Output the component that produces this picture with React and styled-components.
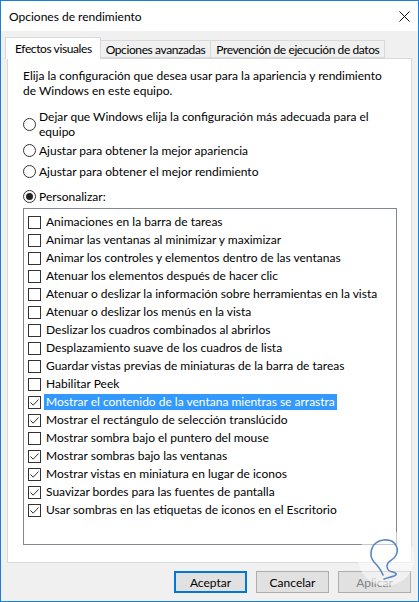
import styled, { createGlobalStyle } from "styled-components";

const GlobalStyle = createGlobalStyle`
  html, body {
    margin: 0;
    padding: 0;
    background: #ffffff;
  }
  body {
    font-family: "Lato", "Noto Sans", sans-serif;
    font-size: 12px;
    color: #000;
  }
`;

const effects = [
  { label: "Animaciones en la barra de tareas", checked: false },
  { label: "Animar las ventanas al minimizar y maximizar", checked: false },
  { label: "Animar los controles y elementos dentro de las ventanas", checked: false },
  { label: "Atenuar los elementos después de hacer clic", checked: false },
  { label: "Atenuar o deslizar la información sobre herramientas en la vista", checked: false },
  { label: "Atenuar o deslizar los menús en la vista", checked: false },
  { label: "Deslizar los cuadros combinados al abrirlos", checked: false },
  { label: "Desplazamiento suave de los cuadros de lista", checked: false },
  { label: "Guardar vistas previas de miniaturas de la barra de tareas", checked: false },
  { label: "Habilitar Peek", checked: false },
  { label: "Mostrar el contenido de la ventana mientras se arrastra", checked: true, selected: true },
  { label: "Mostrar el rectángulo de selección translúcido", checked: true },
  { label: "Mostrar sombra bajo el puntero del mouse", checked: false },
  { label: "Mostrar sombras bajo las ventanas", checked: true },
  { label: "Mostrar vistas en miniatura en lugar de iconos", checked: true },
  { label: "Suavizar bordes para las fuentes de pantalla", checked: true },
  { label: "Usar sombras en las etiquetas de iconos en el Escritorio", checked: true },
];

export default function App() {
  return (
    <>
      <GlobalStyle />
      <Window>
        <TitleBar>
          <Title>Opciones de rendimiento</Title>
          <CloseButton>
            <svg width="11" height="11" viewBox="0 0 11 11">
              <path d="M0.5 0.5 L10.5 10.5 M10.5 0.5 L0.5 10.5" stroke="#111" strokeWidth="1" />
            </svg>
          </CloseButton>
        </TitleBar>

        <Body>
          <Tabs>
            <Tab $active>Efectos visuales</Tab>
            <Tab>Opciones avanzadas</Tab>
            <Tab>Prevención de ejecución de datos</Tab>
          </Tabs>

          <Panel>
            <Intro>
              Elija la configuración que desea usar para la apariencia y rendimiento
              <br />
              de Windows en este equipo.
            </Intro>

            <RadioGroup>
              <RadioRow $gap={0}>
                <Radio />
                <span>
                  Dejar que Windows elija la configuración más adecuada para el
                  <br />
                  equipo
                </span>
              </RadioRow>
              <RadioRow $gap={4}>
                <Radio />
                <span>Ajustar para obtener la mejor apariencia</span>
              </RadioRow>
              <RadioRow $gap={6}>
                <Radio />
                <span>Ajustar para obtener el mejor rendimiento</span>
              </RadioRow>
              <RadioRow $gap={10}>
                <Radio $on />
                <span>Personalizar:</span>
              </RadioRow>
            </RadioGroup>

            <ListBox>
              {effects.map((item) => (
                <ListItem key={item.label}>
                  <CheckBox>
                    {item.checked && (
                      <svg width="11" height="11" viewBox="0 0 11 11">
                        <path d="M1.5 5.5 L4.2 8.2 L9.5 2.5" fill="none" stroke="#333" strokeWidth="1" />
                      </svg>
                    )}
                  </CheckBox>
                  <ItemLabel $selected={item.selected}>{item.label}</ItemLabel>
                </ListItem>
              ))}
            </ListBox>
          </Panel>

          <ButtonRow>
            <Button $default>Aceptar</Button>
            <Button>Cancelar</Button>
            <Button $disabled>Aplicar</Button>
          </ButtonRow>

          <Watermark>
            <svg width="60" height="60" viewBox="0 0 60 60">
              <circle cx="30" cy="30" r="28" fill="rgba(255,255,255,0.55)" />
              <path
                d="M27 47 C25 42 22 38 18 34 C12 27 15 13 28 12 C40 11 45 22 38 30 C35 33 31 34 31 38 C31 42 34 44 37 44 C40 45 42 46 38 48 C35 49 31 50 28 51"
                fill="none"
                stroke="#5b86c0"
                strokeWidth="1.6"
                strokeLinecap="round"
              />
            </svg>
          </Watermark>
        </Body>
      </Window>
    </>
  );
}

const Window = styled.div`
  position: relative;
  width: 419px;
  height: 602px;
  box-sizing: border-box;
  border: 1px solid #1a7fd6;
  display: flex;
  flex-direction: column;
  background: #f0f0f0;
  overflow: hidden;
`;

const TitleBar = styled.div`
  height: 30px;
  background: #ffffff;
  display: flex;
  align-items: center;
  justify-content: space-between;
  padding: 0 6px 0 8px;
`;

const Title = styled.div`
  font-size: 12px;
  padding-top: 1px;
`;

const CloseButton = styled.div`
  width: 16px;
  height: 16px;
  display: flex;
  align-items: center;
  justify-content: center;
`;

const Body = styled.div`
  flex: 1;
  display: flex;
  flex-direction: column;
  padding: 7px 6px 0 6px;
`;

const Tabs = styled.div`
  display: flex;
  align-items: flex-end;
  height: 20px;
  position: relative;
  z-index: 1;
`;

const Tab = styled.div`
  box-sizing: border-box;
  border: 1px solid #d9d9d9;
  border-bottom: ${(p) => (p.$active ? "none" : "1px solid #d9d9d9")};
  background: ${(p) => (p.$active ? "#ffffff" : "#f0f0f0")};
  height: ${(p) => (p.$active ? "22px" : "18px")};
  margin-bottom: ${(p) => (p.$active ? "-1px" : "0")};
  margin-left: ${(p) => (p.$active ? "-2px" : "-1px")};
  padding: ${(p) => (p.$active ? "3px 8px 0 9px" : "1px 5px 0 5px")};
  white-space: nowrap;
  line-height: 15px;
  letter-spacing: -0.4px;
`;

const Panel = styled.div`
  box-sizing: border-box;
  height: 505px;
  background: #ffffff;
  border: 1px solid #d9d9d9;
  padding: 9px 14px 0 15px;
`;

const Intro = styled.div`
  line-height: 15px;
  white-space: nowrap;
`;

const RadioGroup = styled.div`
  display: flex;
  flex-direction: column;
  margin-top: 11px;
  margin-bottom: 4px;
`;

const RadioRow = styled.div`
  display: flex;
  align-items: center;
  gap: 3px;
  margin-top: ${(p) => p.$gap}px;
  line-height: 15px;
  white-space: nowrap;
`;

const Radio = styled.span`
  box-sizing: border-box;
  flex: none;
  width: 13px;
  height: 13px;
  border: 1px solid #333;
  border-radius: 50%;
  background: #fff;
  position: relative;

  &::after {
    content: "";
    display: ${(p) => (p.$on ? "block" : "none")};
    position: absolute;
    left: 2px;
    top: 2px;
    width: 7px;
    height: 7px;
    border-radius: 50%;
    background: #222;
  }
`;

const ListBox = styled.div`
  box-sizing: border-box;
  width: 374px;
  height: 337px;
  border: 1px solid #828790;
  background: #fff;
  padding: 4px 0 0 4px;
  display: flex;
  flex-direction: column;
`;

const ListItem = styled.div`
  height: 18px;
  display: flex;
  align-items: center;
  white-space: nowrap;
`;

const CheckBox = styled.span`
  box-sizing: border-box;
  flex: none;
  width: 13px;
  height: 13px;
  border: 1px solid #333;
  background: #fff;
  display: flex;
  align-items: center;
  justify-content: center;
  margin-right: 3px;
`;

const ItemLabel = styled.span`
  line-height: 16px;
  padding: 0 2px;
  background: ${(p) => (p.$selected ? "#3399ff" : "transparent")};
  color: ${(p) => (p.$selected ? "#ffffff" : "#000")};
`;

const ButtonRow = styled.div`
  display: flex;
  justify-content: flex-end;
  gap: 9px;
  padding: 8px 1px 0 0;
`;

const Button = styled.div`
  box-sizing: border-box;
  width: 73px;
  height: 22px;
  display: flex;
  align-items: center;
  justify-content: center;
  background: #e1e1e1;
  border: ${(p) => (p.$default ? "2px solid #0078d7" : "1px solid #adadad")};
  color: ${(p) => (p.$disabled ? "#838383" : "#000")};
`;

const Watermark = styled.div`
  position: absolute;
  right: 2px;
  bottom: 13px;
  width: 60px;
  height: 60px;
`;
